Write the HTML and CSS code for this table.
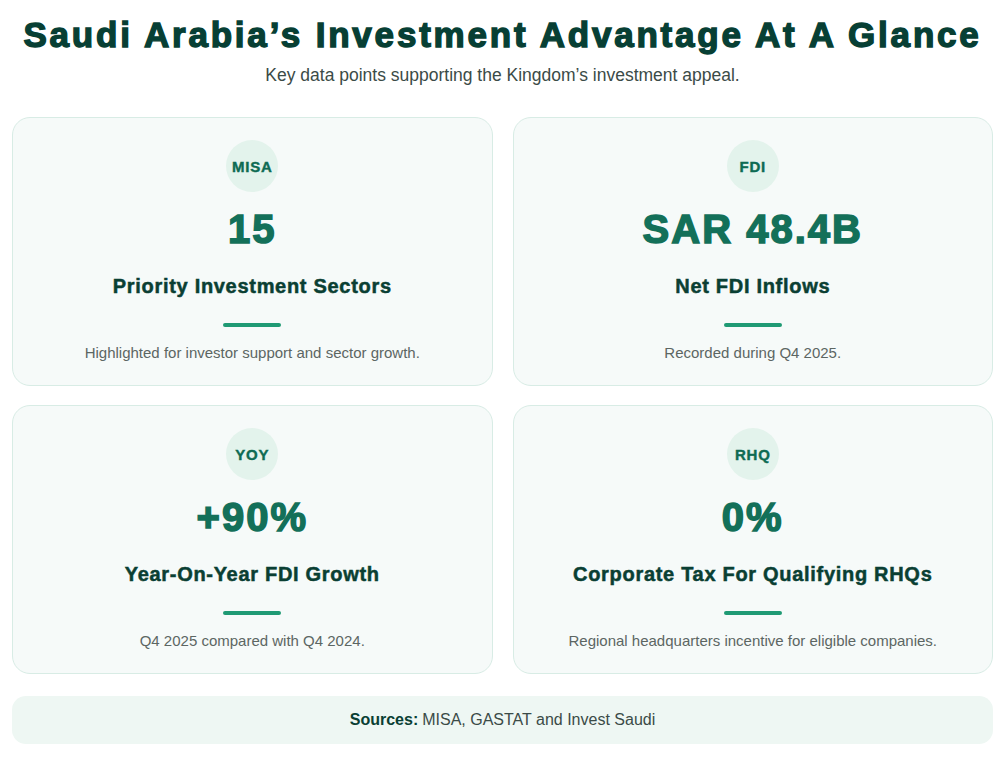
FILE: index.html
```html
<!DOCTYPE html>
<html lang="en">
<head>
<meta charset="utf-8">
<title>Saudi Arabia’s Investment Advantage At A Glance</title>
<link rel="stylesheet" href="styles.css">
</head>
<body>
<main class="page">
  <header class="intro">
    <h1 class="title">Saudi Arabia’s Investment Advantage At A Glance</h1>
    <p class="subtitle">Key data points supporting the Kingdom’s investment appeal.</p>
  </header>
  <section class="grid">
    <article class="card">
      <div class="badge">MISA</div>
      <div class="value">15</div>
      <h2 class="label">Priority Investment Sectors</h2>
      <div class="divider"></div>
      <p class="desc">Highlighted for investor support and sector growth.</p>
    </article>
    <article class="card">
      <div class="badge">FDI</div>
      <div class="value">SAR 48.4B</div>
      <h2 class="label">Net FDI Inflows</h2>
      <div class="divider"></div>
      <p class="desc">Recorded during Q4 2025.</p>
    </article>
    <article class="card">
      <div class="badge">YOY</div>
      <div class="value">+90%</div>
      <h2 class="label">Year-On-Year FDI Growth</h2>
      <div class="divider"></div>
      <p class="desc">Q4 2025 compared with Q4 2024.</p>
    </article>
    <article class="card">
      <div class="badge">RHQ</div>
      <div class="value">0%</div>
      <h2 class="label">Corporate Tax For Qualifying RHQs</h2>
      <div class="divider"></div>
      <p class="desc">Regional headquarters incentive for eligible companies.</p>
    </article>
  </section>
  <footer class="sources"><strong>Sources:</strong> MISA, GASTAT and Invest Saudi</footer>
</main>
</body>
</html>
```
FILE: styles.css
```css
html, body {
  margin: 0;
  padding: 0;
  background: #ffffff;
}
body {
  font-family: "Liberation Sans", Arial, sans-serif;
  color: #0b3d33;
}
.page {
  padding: 15px 12px 12px;
}
.intro {
  text-align: center;
}
.title {
  margin: 0;
  font-size: 35px;
  line-height: 40px;
  font-weight: 700;
  color: #073f34;
  letter-spacing: 2.8px;
  -webkit-text-stroke: 1.4px #073f34;
}
.subtitle {
  margin: 9px 0 0;
  font-size: 17.5px;
  line-height: 22px;
  color: #3b4b47;
}
.grid {
  margin-top: 31px;
  display: grid;
  grid-template-columns: 1fr 1fr;
  column-gap: 20px;
  row-gap: 19px;
}
.card {
  background: #f6faf9;
  border: 1px solid #d8ece5;
  border-radius: 18px;
  padding: 22px 24px 22px;
  display: flex;
  flex-direction: column;
  align-items: center;
  text-align: center;
  box-sizing: border-box;
  height: 269px;
}
.badge {
  width: 52px;
  height: 52px;
  border-radius: 50%;
  background: #e3f3ec;
  color: #0e6b53;
  font-size: 15px;
  font-weight: 700;
  letter-spacing: 0.8px;
  -webkit-text-stroke: 0.4px #0e6b53;
  display: flex;
  align-items: center;
  justify-content: center;
}
.value {
  margin-top: 13px;
  font-size: 40px;
  line-height: 48px;
  font-weight: 700;
  color: #137059;
  letter-spacing: 2px;
  -webkit-text-stroke: 1.5px #137059;
}
.label {
  margin: 21px 0 0;
  font-size: 20px;
  line-height: 24px;
  font-weight: 700;
  color: #0a3f33;
  letter-spacing: 0.7px;
  -webkit-text-stroke: 0.5px #0a3f33;
}
.divider {
  margin-top: 25px;
  width: 58px;
  height: 4px;
  border-radius: 2px;
  background: #1f9a74;
}
.desc {
  margin: 16px 0 0;
  font-size: 15px;
  line-height: 20px;
  color: #5c6663;
}
.sources {
  margin-top: 22px;
  background: #eef7f3;
  border-radius: 14px;
  height: 48px;
  display: flex;
  align-items: center;
  justify-content: center;
  font-size: 16px;
  color: #3b4b47;
}
.sources strong {
  color: #0a3f33;
  margin-right: 4px;
}
```
